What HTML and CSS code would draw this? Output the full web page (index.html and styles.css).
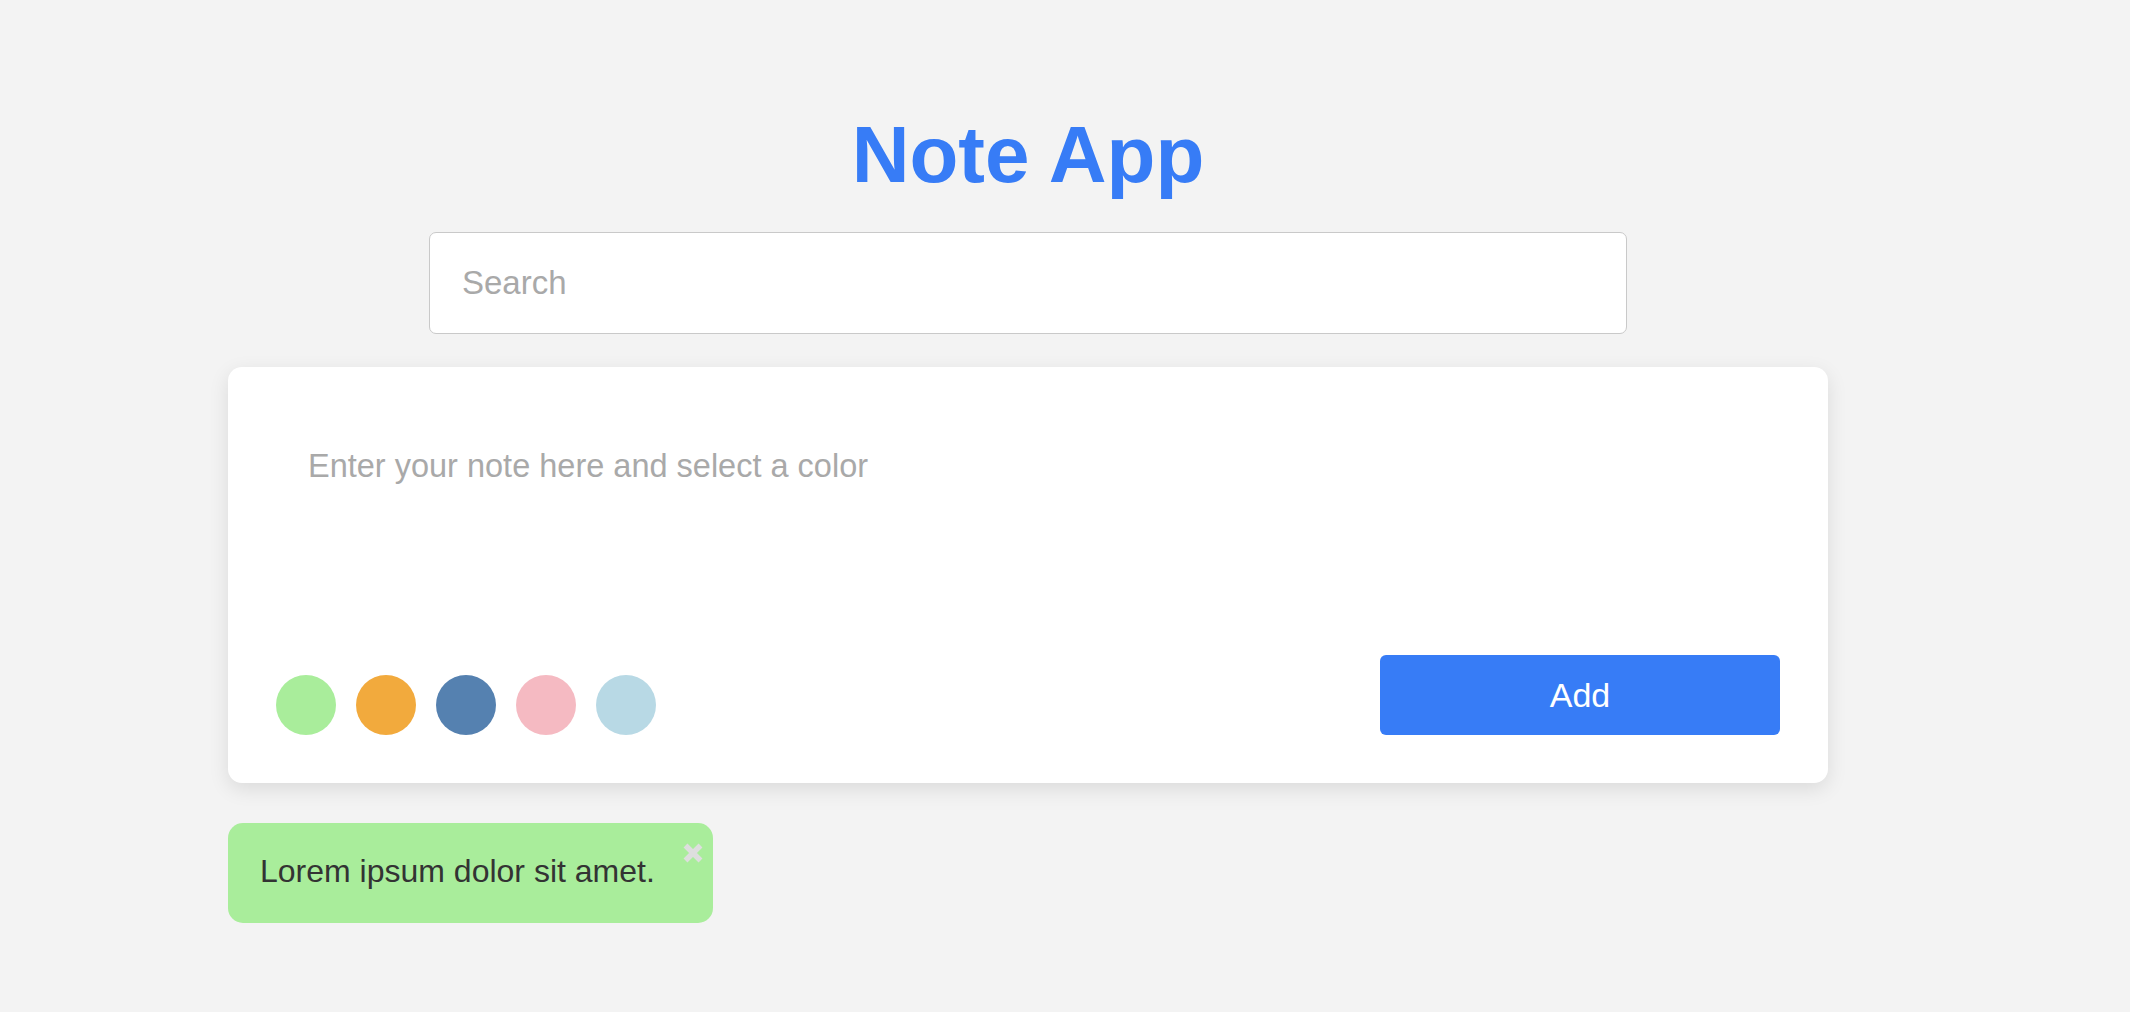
FILE: index.html
```html
<!DOCTYPE html>
<html lang="en">
<head>
<meta charset="utf-8">
<title>Note App</title>
<link rel="stylesheet" href="styles.css">
</head>
<body>
<main class="app">
  <h1 class="title">Note App</h1>
  <input class="search" type="text" placeholder="Search">
  <section class="editor">
    <textarea class="note-input" placeholder="Enter your note here and select a color"></textarea>
    <div class="editor-footer">
      <div class="colors">
        <span class="swatch swatch-green"></span>
        <span class="swatch swatch-orange"></span>
        <span class="swatch swatch-blue"></span>
        <span class="swatch swatch-pink"></span>
        <span class="swatch swatch-sky"></span>
      </div>
      <button class="add-btn" type="button">Add</button>
    </div>
  </section>
  <div class="notes">
    <div class="note note-green">
      <p class="note-text">Lorem ipsum dolor sit amet.</p>
      <button class="note-close" type="button" aria-label="Delete">
        <svg width="20" height="20" viewBox="0 0 20 20"><path d="M2.5 2.5 L17.5 17.5 M17.5 2.5 L2.5 17.5" stroke="#dedede" stroke-width="5.5" fill="none"/></svg>
      </button>
    </div>
  </div>
</main>
</body>
</html>
```

FILE: styles.css
```css
html, body {
  margin: 0;
  padding: 0;
  background: #f3f3f3;
}

body {
  padding-right: 74px;
  font-family: "Liberation Sans", Arial, sans-serif;
}

.app {
  width: 1600px;
  margin: 0 auto;
  padding-top: 110px;
  display: flex;
  flex-direction: column;
  align-items: center;
}

.title {
  margin: 0;
  font-size: 80px;
  line-height: 90px;
  font-weight: 700;
  color: #377cf6;
}

.search {
  box-sizing: border-box;
  width: 1198px;
  height: 102px;
  margin-top: 32px;
  padding: 0 32px;
  border: 1px solid #c9c9c9;
  border-radius: 7px;
  background: #fff;
  font-family: "Liberation Sans", Arial, sans-serif;
  font-size: 33px;
  color: #333;
  outline: none;
}

.search::placeholder {
  color: #a9a9a9;
}

.editor {
  box-sizing: border-box;
  width: 1600px;
  height: 416px;
  margin-top: 33px;
  padding: 48px;
  background: #fff;
  border-radius: 14px;
  box-shadow: 0 6px 20px rgba(0, 0, 0, 0.1);
  display: flex;
  flex-direction: column;
}

.note-input {
  display: block;
  box-sizing: border-box;
  width: 100%;
  height: 240px;
  margin: 0;
  padding: 32px 32px 0;
  border: none;
  outline: none;
  resize: none;
  background: transparent;
  font-family: "Liberation Sans", Arial, sans-serif;
  font-size: 32.5px;
  line-height: 1.2;
  color: #333;
}

.note-input::placeholder {
  color: #a9a9a9;
}

.editor-footer {
  display: flex;
  justify-content: space-between;
  align-items: flex-end;
  height: 80px;
}

.colors {
  display: flex;
  gap: 20px;
}

.swatch {
  display: block;
  width: 60px;
  height: 60px;
  border-radius: 50%;
}

.swatch-green { background: #a9ed9b; }
.swatch-orange { background: #f2aa3d; }
.swatch-blue { background: #5581b0; }
.swatch-pink { background: #f5bac2; }
.swatch-sky { background: #b8d9e5; }

.add-btn {
  width: 400px;
  height: 80px;
  border: none;
  border-radius: 6px;
  background: #377cf6;
  color: #fff;
  font-family: "Liberation Sans", Arial, sans-serif;
  font-size: 34px;
  cursor: pointer;
}

.notes {
  align-self: stretch;
  margin-top: 40px;
  display: flex;
  flex-wrap: wrap;
  gap: 24px;
}

.note {
  position: relative;
  box-sizing: border-box;
  width: 485px;
  height: 100px;
  padding: 30px 32px 0;
  border-radius: 15px;
}

.note-green { background: #a9ed9b; }

.note-text {
  margin: 0;
  font-size: 32px;
  line-height: 36px;
  color: #333;
}

.note-close {
  position: absolute;
  top: 20px;
  right: 10px;
  width: 20px;
  height: 20px;
  padding: 0;
  border: none;
  background: transparent;
  cursor: pointer;
}

.note-close svg {
  display: block;
}
```
